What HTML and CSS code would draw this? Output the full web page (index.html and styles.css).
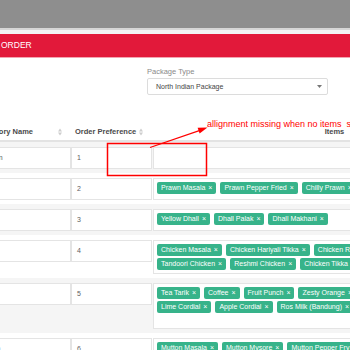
FILE: index.html
```html
<!DOCTYPE html>
<html lang="en">
<head>
    <meta charset="UTF-8">
    <meta name="viewport" content="width=device-width, initial-scale=1.0">
    <title>Package Order</title>
    <link rel="stylesheet" href="styles.css">
</head>
<body>
    <div class="topbar"></div>
    <div class="titlebar">ORDER</div>

    <div class="filter">
        <label class="filter-label">Package Type</label>
        <div class="select">
            <span>North Indian Package</span>
            <svg class="caret" width="5" height="3" viewBox="0 0 5 3"><path d="M0 0h5L2.5 3z"/></svg>
        </div>
    </div>

    <div class="table-wrap">
        <table class="grid">
            <thead>
                <tr>
                    <th class="col-name"><div class="th-in">Category Name <svg class="sort" width="4" height="8" viewBox="0 0 4 8"><path d="M0 3.4L2 .6 4 3.4zM0 4.6L2 7.4 4 4.6z"/></svg></div></th>
                    <th class="col-pref"><div class="th-in">Order Preference <svg class="sort" width="4" height="8" viewBox="0 0 4 8"><path d="M0 3.4L2 .6 4 3.4zM0 4.6L2 7.4 4 4.6z"/></svg></div></th>
                    <th class="col-items">Items</th>
                </tr>
            </thead>
            <tbody>
                <tr>
                    <td><div class="field">Salmon</div></td>
                    <td><div class="field">1</div></td>
                    <td class="items"><div class="picker"></div></td>
                </tr>
                <tr>
                    <td><div class="field">Prawn</div></td>
                    <td><div class="field">2</div></td>
                    <td class="items">
                        <div class="picker">
                            <span class="tag">Prawn Masala<b>×</b></span>
                            <span class="tag">Prawn Pepper Fried<b>×</b></span>
                            <span class="tag">Chilly Prawn<b>×</b></span>
                        </div>
                    </td>
                </tr>
                <tr>
                    <td><div class="field">Dhall</div></td>
                    <td><div class="field">3</div></td>
                    <td class="items">
                        <div class="picker">
                            <span class="tag">Yellow Dhall<b>×</b></span>
                            <span class="tag">Dhall Palak<b>×</b></span>
                            <span class="tag">Dhall Makhani<b>×</b></span>
                        </div>
                    </td>
                </tr>
                <tr>
                    <td><div class="field">Tikka</div></td>
                    <td><div class="field">4</div></td>
                    <td class="items">
                        <div class="picker">
                            <span class="tag">Chicken Masala<b>×</b></span>
                            <span class="tag">Chicken Hariyali Tikka<b>×</b></span>
                            <span class="tag">Chicken Rendang<b>×</b></span>
                            <span class="tag">Tandoori Chicken<b>×</b></span>
                            <span class="tag">Reshmi Chicken<b>×</b></span>
                            <span class="tag">Chicken Tikka<b>×</b></span>
                        </div>
                    </td>
                </tr>
                <tr>
                    <td><div class="field">Drinks</div></td>
                    <td><div class="field">5</div></td>
                    <td class="items">
                        <div class="picker">
                            <span class="tag">Tea Tarik<b>×</b></span>
                            <span class="tag">Coffee<b>×</b></span>
                            <span class="tag">Fruit Punch<b>×</b></span>
                            <span class="tag">Zesty Orange<b>×</b></span>
                            <span class="tag">Lime Cordial<b>×</b></span>
                            <span class="tag">Apple Cordial<b>×</b></span>
                            <span class="tag">Ros Milk (Bandung)<b>×</b></span>
                            <input class="search" type="text">
                        </div>
                    </td>
                </tr>
                <tr>
                    <td><div class="field">Mutton</div></td>
                    <td><div class="field">6</div></td>
                    <td class="items">
                        <div class="picker">
                            <span class="tag">Mutton Masala<b>×</b></span>
                            <span class="tag">Mutton Mysore<b>×</b></span>
                            <span class="tag">Mutton Pepper Fry<b>×</b></span>
                        </div>
                    </td>
                </tr>
            </tbody>
        </table>
    </div>

    <!-- review markup drawn over the screenshot -->
    <svg class="markup" width="350" height="350" viewBox="0 0 350 350">
        <rect x="107.5" y="143.5" width="99" height="32" fill="none" stroke="#f00" stroke-width="1.5"/>
        <line x1="150" y1="147.5" x2="200" y2="130.3" stroke="#f00" stroke-width="1.3"/>
        <polygon points="207.5,127.6 199.6,133.6 197.6,127.8" fill="#f00"/>
    </svg>
    <div class="note">allignment missing when no items  se</div>
</body>
</html>
```

FILE: styles.css
```css
html, body {
    overflow: hidden;
}
body {
    margin: 0;
    font-family: "Liberation Sans", Arial, sans-serif;
    background-color: #fff;
    color: #555;
}
.topbar {
    height: 28px;
    background-color: #8e8e8e;
    border-bottom: 2px solid #d6d6d6;
}
.titlebar {
    border-top: 4px solid #f3f3f3;
    height: 23px;
    line-height: 23px;
    background-color: #e2193a;
    border-bottom: 1px solid #f2a5b1;
    color: #fff;
    font-size: 8.5px;
    padding-left: 1px;
}
.filter {
    padding: 9px 0 0 147px;
}
.filter-label {
    display: block;
    font-size: 7.5px;
    line-height: 10px;
    color: #8a8a8a;
    margin-bottom: 1px;
}
.select {
    width: 181px;
    height: 17px;
    box-sizing: border-box;
    border: 1px solid #dcdcdc;
    border-radius: 2px;
    display: flex;
    align-items: center;
    justify-content: space-between;
    padding: 0 5px 0 8px;
    font-size: 7px;
    color: #444;
}
.caret {
    fill: #777;
}
.table-wrap {
    margin: 24px 0 0 -27px;
}
.grid {
    border-collapse: separate;
    border-spacing: 0;
    table-layout: fixed;
    width: 544px;
    font-size: 7px;
}
.grid th {
    font-size: 7.5px;
    font-weight: bold;
    color: #4a4a4a;
    line-height: 10px;
    padding: 8px 0 3px;
    border-bottom: 2px solid #e3e3e3;
    text-align: left;
    white-space: nowrap;
}
.col-name {
    width: 98px;
}
.col-pref {
    width: 81px;
}
.grid th.col-items {
    width: 365px;
    text-align: center;
}
.th-in {
    display: flex;
    justify-content: space-between;
    align-items: center;
    padding: 0 9px 0 5px;
}
.col-pref .th-in {
    padding-left: 4px;
}
.sort {
    fill: #cdcdcd;
    flex-shrink: 0;
}
.grid td {
    padding: 5px 0 4px;
    vertical-align: top;
}
.grid tbody tr:nth-child(odd) td {
    background-color: #f5f5f5;
}
.field {
    height: 22px;
    box-sizing: border-box;
    border: 1px solid #e4e4e4;
    background-color: #fff;
    padding: 0 5px;
    line-height: 20px;
    color: #5e5e5e;
    white-space: nowrap;
    overflow: hidden;
}
.grid td.items {
    padding-left: 1px;
}
.picker {
    width: 254px;
    min-height: 22px;
    box-sizing: border-box;
    border: 1px solid #e4e4e4;
    background-color: #fff;
    padding: 3px 4px 3px 3px;
    display: flex;
    flex-wrap: wrap;
    align-content: flex-start;
    gap: 2px 4px;
}
.tag {
    height: 12px;
    line-height: 12px;
    padding: 0 4px;
    background-color: #37b38a;
    color: #fff;
    border-radius: 2px;
    font-size: 7px;
    white-space: nowrap;
}
.tag b {
    font-weight: normal;
    margin-left: 3px;
}
.search {
    flex: 1 0 60px;
    height: 10px;
    margin: 0;
    padding: 0;
    border: none;
    outline: none;
    background: transparent;
}
.markup {
    position: absolute;
    top: 0;
    left: 0;
    pointer-events: none;
}
.note {
    position: absolute;
    left: 207px;
    top: 119px;
    font-size: 9px;
    line-height: 10px;
    color: #f00;
    white-space: pre;
}
```
